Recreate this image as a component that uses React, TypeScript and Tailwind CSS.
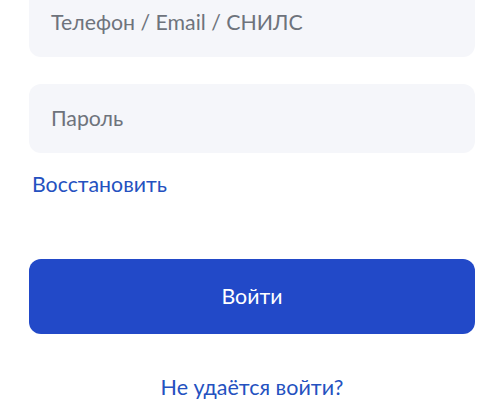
export default function App() {
  return (
    <div className="w-[500px] h-[400px] overflow-hidden bg-white font-['Lato','Noto_Sans',sans-serif]">
      <div className="ml-[29px] w-[446px] flex flex-col">
        {/* Login field */}
        <div className="mt-[-12px] h-[69px] rounded-xl bg-[#f5f6fa] flex items-center px-[22px]">
          <span className="text-[21.3px] text-[#6e737c]">Телефон / Email / СНИЛС</span>
        </div>

        {/* Password field */}
        <div className="mt-[27px] h-[69px] rounded-xl bg-[#f5f6fa] flex items-center px-[22px]">
          <span className="text-[21.3px] text-[#6e737c]">Пароль</span>
        </div>

        <a className="mt-[19px] ml-[3px] text-[21.3px] leading-6 text-[#2451c0]">Восстановить</a>

        <button className="mt-[63px] h-[75px] rounded-xl bg-[#2249c8] text-white text-[21.3px]">
          Войти
        </button>

        <a className="mt-[41px] text-center text-[21.5px] leading-6 text-[#2451c0]">Не удаётся войти?</a>
      </div>
    </div>
  );
}
